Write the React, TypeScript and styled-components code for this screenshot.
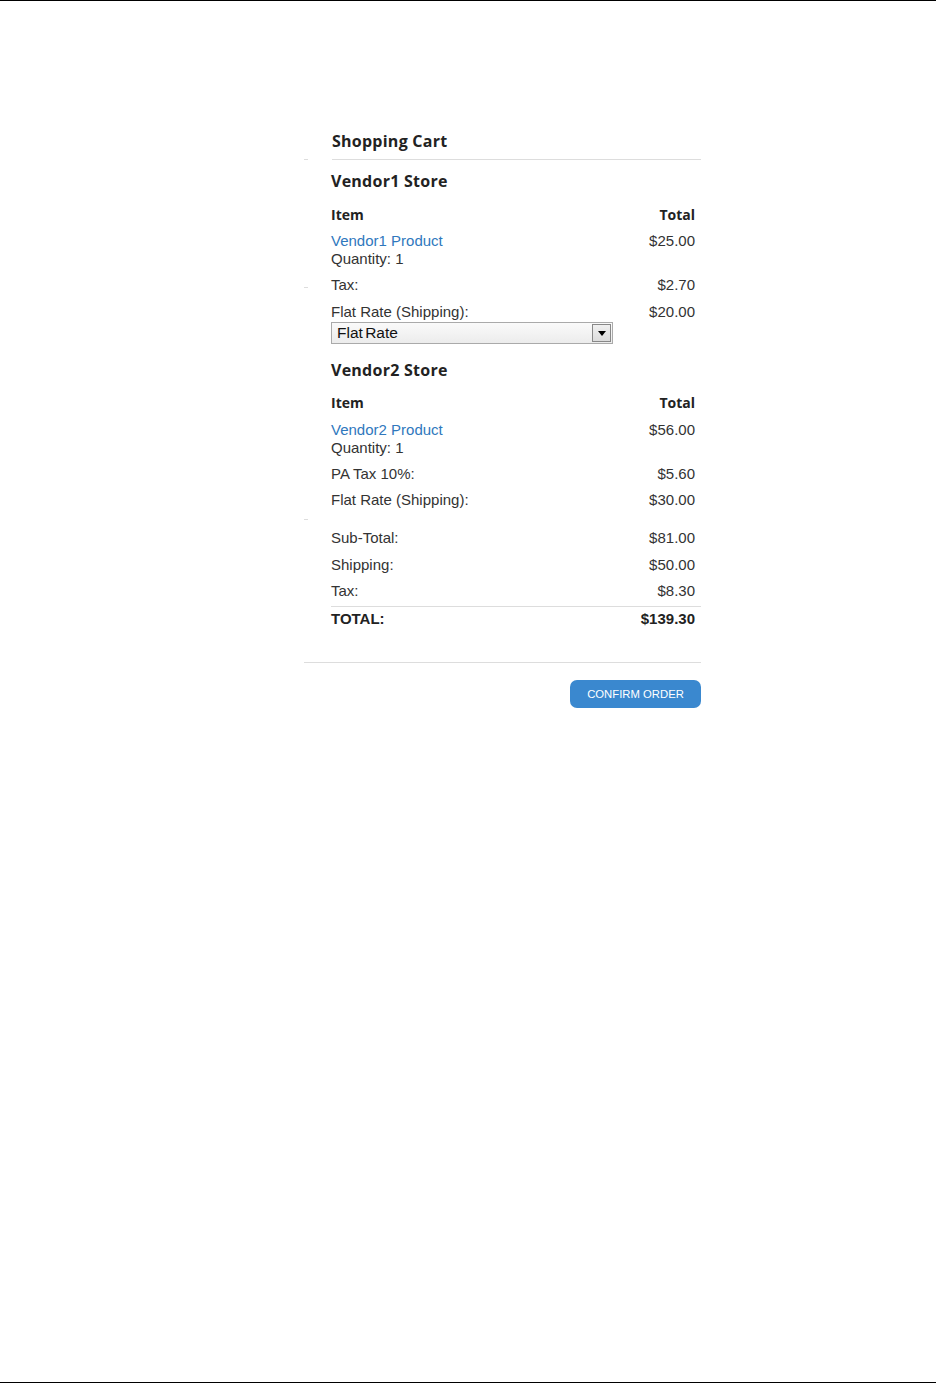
import styled, { createGlobalStyle } from "styled-components";

const GlobalStyle = createGlobalStyle`
    html, body {
      margin: 0;
      padding: 0;
      background: #fff;
    }
    body {
      font-family: "Liberation Sans", Arial, sans-serif;
      color: #333;
    }
`;

const Page = styled.div`
    box-sizing: border-box;
    height: 1383px;
    margin-bottom: 1px;
    border-top: 1px solid #000;
    border-bottom: 1px solid #000;
    padding: 130px 0 0 304px;
`;

const Cart = styled.div`
    position: relative;
    width: 397px;
`;

const Tick = styled.span<{ $top: number }>`
    position: absolute;
    left: 0;
    top: ${(p) => p.$top}px;
    width: 4px;
    height: 1px;
    background: #ddd;
`;

const Title = styled.h2`
    margin: 0 0 0 28px;
    font-family: "Open Sans", sans-serif;
    font-size: 16px;
    font-weight: 700;
    line-height: 20px;
    letter-spacing: 0.25px;
    color: #222;
`;

const Divider = styled.hr<{ $inset?: boolean; $gap: number }>`
    margin: ${(p) => p.$gap}px 0 0 ${(p) => (p.$inset ? 28 : 0)}px;
    border: none;
    border-top: 1px solid #ddd;
    height: 0;
`;

const Body = styled.div`
    padding: 0 6px 0 27px;
`;

const StoreName = styled.h3<{ $gap: number }>`
    margin: ${(p) => p.$gap}px 0 0;
    font-family: "Open Sans", sans-serif;
    font-size: 16px;
    font-weight: 700;
    line-height: 20px;
    letter-spacing: 0.25px;
    color: #222;
`;

const Row = styled.div<{ $gap: number; $bold?: boolean; $head?: boolean }>`
    display: flex;
    justify-content: space-between;
    align-items: flex-start;
    margin-top: ${(p) => p.$gap}px;
    font-size: ${(p) => (p.$head ? "14px" : "15px")};
    line-height: 18px;
    font-family: ${(p) => (p.$head ? '"Open Sans", sans-serif' : '"Liberation Sans", Arial, sans-serif')};
    font-weight: ${(p) => (p.$bold || p.$head ? 700 : 400)};
    color: ${(p) => (p.$head || p.$bold ? "#222" : "#333")};
`;

const Cell = styled.div`
    display: flex;
    flex-direction: column;
`;

const ProductLink = styled.a`
    color: #2f78bd;
    text-decoration: none;
`;

const TotalsLine = styled.div`
    margin: 6px -6px 0 0;
    border-top: 1px solid #ddd;
`;

const FakeSelect = styled.div`
    box-sizing: border-box;
    display: flex;
    align-items: center;
    justify-content: space-between;
    width: 282px;
    height: 22px;
    margin-top: 1px;
    padding: 0 1px 0 5px;
    border: 1px solid #aaa;
    background: linear-gradient(#fafafa, #ececec);
    font-size: 15.5px;
    color: #111;
    word-spacing: -2px;
`;

const SelectArrow = styled.span`
    box-sizing: border-box;
    display: flex;
    align-items: center;
    justify-content: center;
    width: 19px;
    height: 18px;
    border: 1px solid #888;
    background: linear-gradient(#f0f0f0, #dcdcdc);
`;

const Actions = styled.div`
    display: flex;
    justify-content: flex-end;
    margin-top: 17px;
`;

const ConfirmButton = styled.button`
    width: 131px;
    height: 28px;
    border: none;
    border-radius: 7px;
    background: #3a88cf;
    color: #fff;
    font-family: "Liberation Sans", Arial, sans-serif;
    font-size: 11.3px;
    padding: 0;
    cursor: pointer;
`;

type Line = { label: string; amount: string; gap: number };

const Store = ({
    name,
    gap,
    product,
    price,
    lines,
    select,
}: {
    name: string;
    gap: number;
    product: string;
    price: string;
    lines: Line[];
    select?: boolean;
}) => (
    <>
        <StoreName $gap={gap}>{name}</StoreName>
        <Row $gap={select ? 15 : 14} $head>
            <span>Item</span>
            <span>Total</span>
        </Row>
        <Row $gap={select ? 8 : 9}>
            <Cell>
                <ProductLink href="#">{product}</ProductLink>
                <span>Quantity: 1</span>
            </Cell>
            <span>{price}</span>
        </Row>
        {lines.map((l) => (
            <Row key={l.label} $gap={l.gap}>
                <span>{l.label}</span>
                <span>{l.amount}</span>
            </Row>
        ))}
        {select && (
            <FakeSelect>
                <span>Flat Rate</span>
                <SelectArrow>
                    <svg width="8" height="5" viewBox="0 0 8 5">
                        <path d="M0 0h8L4 5z" fill="#000" />
                    </svg>
                </SelectArrow>
            </FakeSelect>
        )}
    </>
);

export default function App() {
    return (
        <Page>
            <GlobalStyle />
            <Cart>
                <Tick $top={28} />
                <Tick $top={156} />
                <Tick $top={388} />
                <Title>Shopping Cart</Title>
                <Divider $inset $gap={8} />
                <Body>
                    <Store
                        name="Vendor1 Store"
                        gap={11}
                        product="Vendor1 Product"
                        price="$25.00"
                        select
                        lines={[
                            { label: "Tax:", amount: "$2.70", gap: 8 },
                            { label: "Flat Rate (Shipping):", amount: "$20.00", gap: 9 },
                        ]}
                    />
                    <Store
                        name="Vendor2 Store"
                        gap={16}
                        product="Vendor2 Product"
                        price="$56.00"
                        lines={[
                            { label: "PA Tax 10%:", amount: "$5.60", gap: 8 },
                            { label: "Flat Rate (Shipping):", amount: "$30.00", gap: 8 },
                        ]}
                    />
                    <Row $gap={20}>
                        <span>Sub-Total:</span>
                        <span>$81.00</span>
                    </Row>
                    <Row $gap={9}>
                        <span>Shipping:</span>
                        <span>$50.00</span>
                    </Row>
                    <Row $gap={8}>
                        <span>Tax:</span>
                        <span>$8.30</span>
                    </Row>
                    <TotalsLine />
                    <Row $gap={3} $bold>
                        <span>TOTAL:</span>
                        <span>$139.30</span>
                    </Row>
                </Body>
                <Divider $gap={34} />
                <Actions>
                    <ConfirmButton>CONFIRM ORDER</ConfirmButton>
                </Actions>
            </Cart>
        </Page>
    );
}
